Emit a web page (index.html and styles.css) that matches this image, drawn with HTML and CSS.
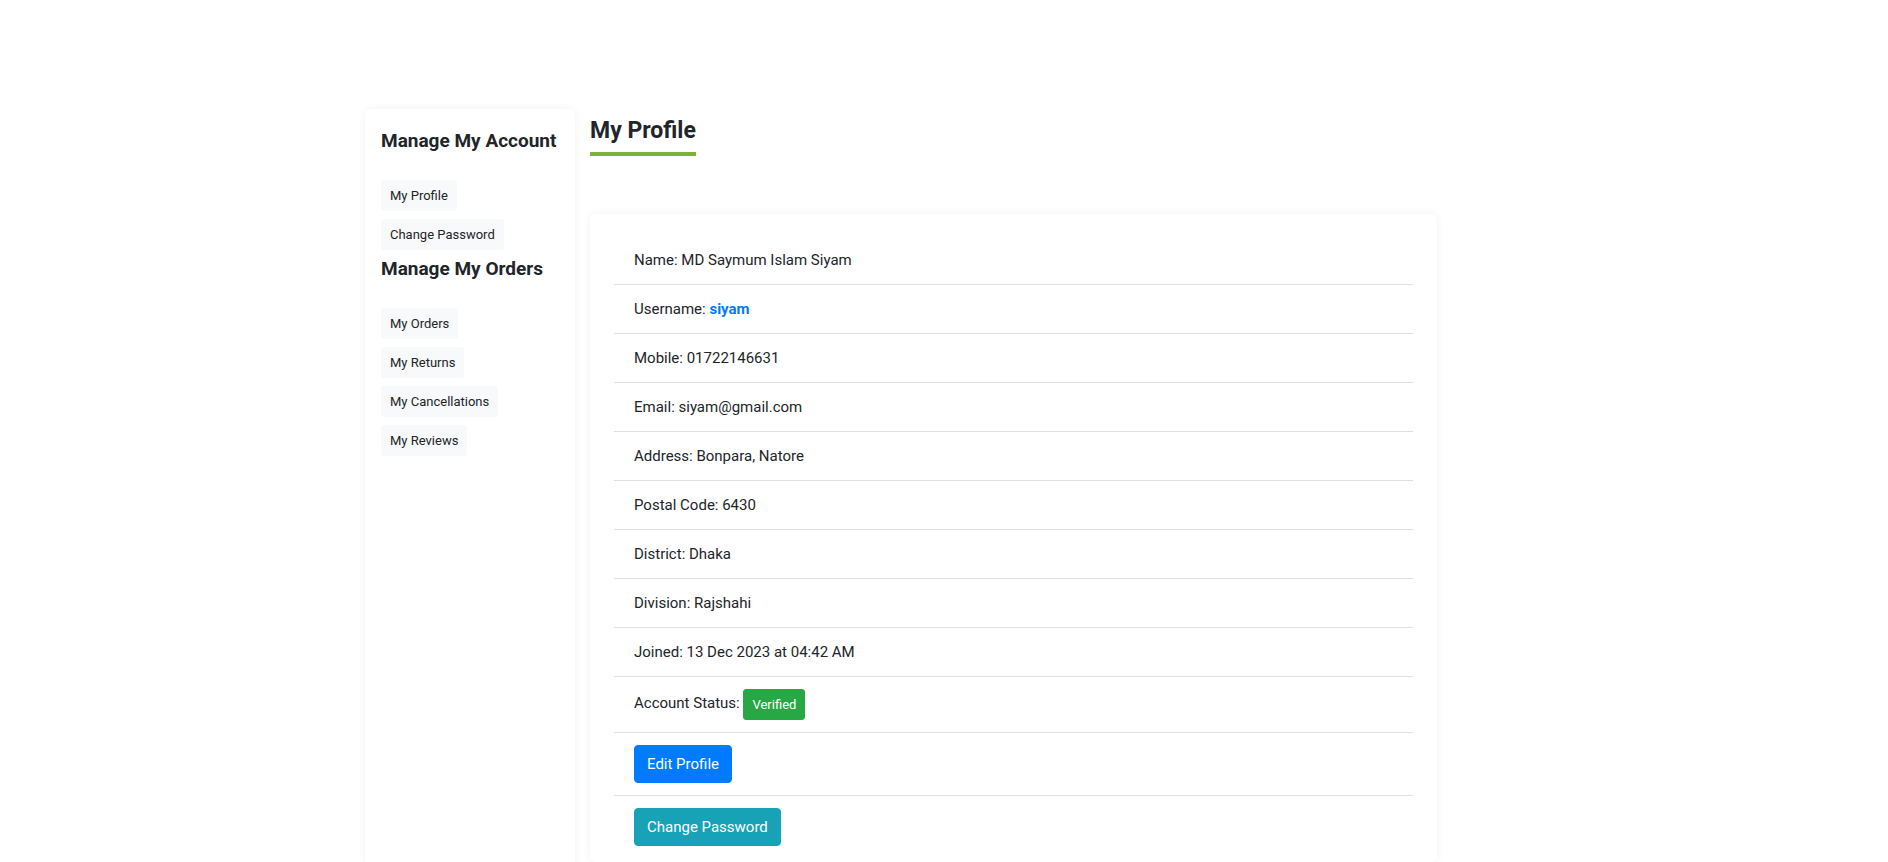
FILE: index.html
```html
<!DOCTYPE html>
<html lang="en">
<head>
<meta charset="utf-8">
<title>My Profile</title>
<link rel="stylesheet" href="styles.css">
</head>
<body>
<div class="page">
  <aside class="sidebar">
    <h5 class="side-title">Manage My Account</h5>
    <ul class="side-list">
      <li><a class="side-btn" href="#">My Profile</a></li>
      <li><a class="side-btn" href="#">Change Password</a></li>
    </ul>
    <h5 class="side-title">Manage My Orders</h5>
    <ul class="side-list">
      <li><a class="side-btn" href="#">My Orders</a></li>
      <li><a class="side-btn" href="#">My Returns</a></li>
      <li><a class="side-btn" href="#">My Cancellations</a></li>
      <li><a class="side-btn" href="#">My Reviews</a></li>
    </ul>
  </aside>
  <main class="main">
    <h3 class="page-title">My Profile</h3>
    <div class="card">
      <ul class="info-list">
        <li class="info-item">Name: MD Saymum Islam Siyam</li>
        <li class="info-item">Username: <strong class="username">siyam</strong></li>
        <li class="info-item">Mobile: 01722146631</li>
        <li class="info-item">Email: siyam@gmail.com</li>
        <li class="info-item">Address: Bonpara, Natore</li>
        <li class="info-item">Postal Code: 6430</li>
        <li class="info-item">District: Dhaka</li>
        <li class="info-item">Division: Rajshahi</li>
        <li class="info-item">Joined: 13 Dec 2023 at 04:42 AM</li>
        <li class="info-item">Account Status: <span class="badge-verified">Verified</span></li>
        <li class="info-item"><a class="btn btn-primary" href="#">Edit Profile</a></li>
        <li class="info-item"><a class="btn btn-info" href="#">Change Password</a></li>
      </ul>
    </div>
  </main>
</div>
</body>
</html>
```
FILE: styles.css
```css
* { box-sizing: border-box; }
html, body { margin: 0; padding: 0; }
body {
  font-family: Roboto, "Noto Sans", sans-serif;
  color: #212529;
  background: #fff;
  font-size: 16px;
  line-height: 1.5;
}
.page {
  display: flex;
  align-items: flex-start;
  gap: 15px;
  padding-top: 109px;
  padding-left: 365px;
}
.sidebar {
  width: 210px;
  min-height: 760px;
  padding: 21px 16px 16px;
  background: #fff;
  border-radius: 6px;
  box-shadow: 0 0 8px rgba(0,0,0,0.06);
}
.side-title {
  margin: 0 0 27px;
  font-size: 19px;
  font-weight: 700;
  line-height: 1.2;
  color: #212529;
  white-space: nowrap;
}
.side-list {
  list-style: none;
  margin: 0;
  padding: 0;
}
.side-list li { margin-bottom: 8px; }
.side-btn {
  display: inline-block;
  padding: 4px 8px;
  font-size: 13px;
  line-height: 21px;
  color: #212529;
  text-decoration: none;
  background: #f8f9fa;
  border: 1px solid #f8f9fa;
  border-radius: 3px;
}
.main {
  width: 847px;
}
.page-title {
  display: inline-block;
  margin: 0;
  padding-top: 7px;
  font-size: 23px;
  font-weight: 700;
  line-height: 1.3;
  border-bottom: 4px solid #7cb13a;
  padding-bottom: 6px;
  color: #212529;
}
.card {
  margin-top: 58px;
  padding: 22px 24px 4px;
  background: #fff;
  border-radius: 6px;
  box-shadow: 0 0 8px rgba(0,0,0,0.06);
}
.info-list {
  list-style: none;
  margin: 0;
  padding: 0;
}
.info-item {
  padding: 12px 20px;
  border-bottom: 1px solid #dfdfdf;
  font-size: 15px;
  line-height: 24px;
}
.info-item:last-child { border-bottom: none; }
.username { color: #007bff; font-weight: 700; }
.badge-verified {
  display: inline-block;
  vertical-align: middle;
  padding: 4px 8px;
  font-size: 13px;
  line-height: 21px;
  color: #fff;
  background: #28a745;
  border: 1px solid #28a745;
  border-radius: 3px;
}
.btn {
  display: inline-block;
  padding: 6px 12px;
  font-size: 15px;
  line-height: 24px;
  color: #fff;
  text-decoration: none;
  border: 1px solid transparent;
  border-radius: 4px;
}
.btn-primary { background: #007bff; border-color: #007bff; }
.btn-info { background: #17a2b8; border-color: #17a2b8; }
```
